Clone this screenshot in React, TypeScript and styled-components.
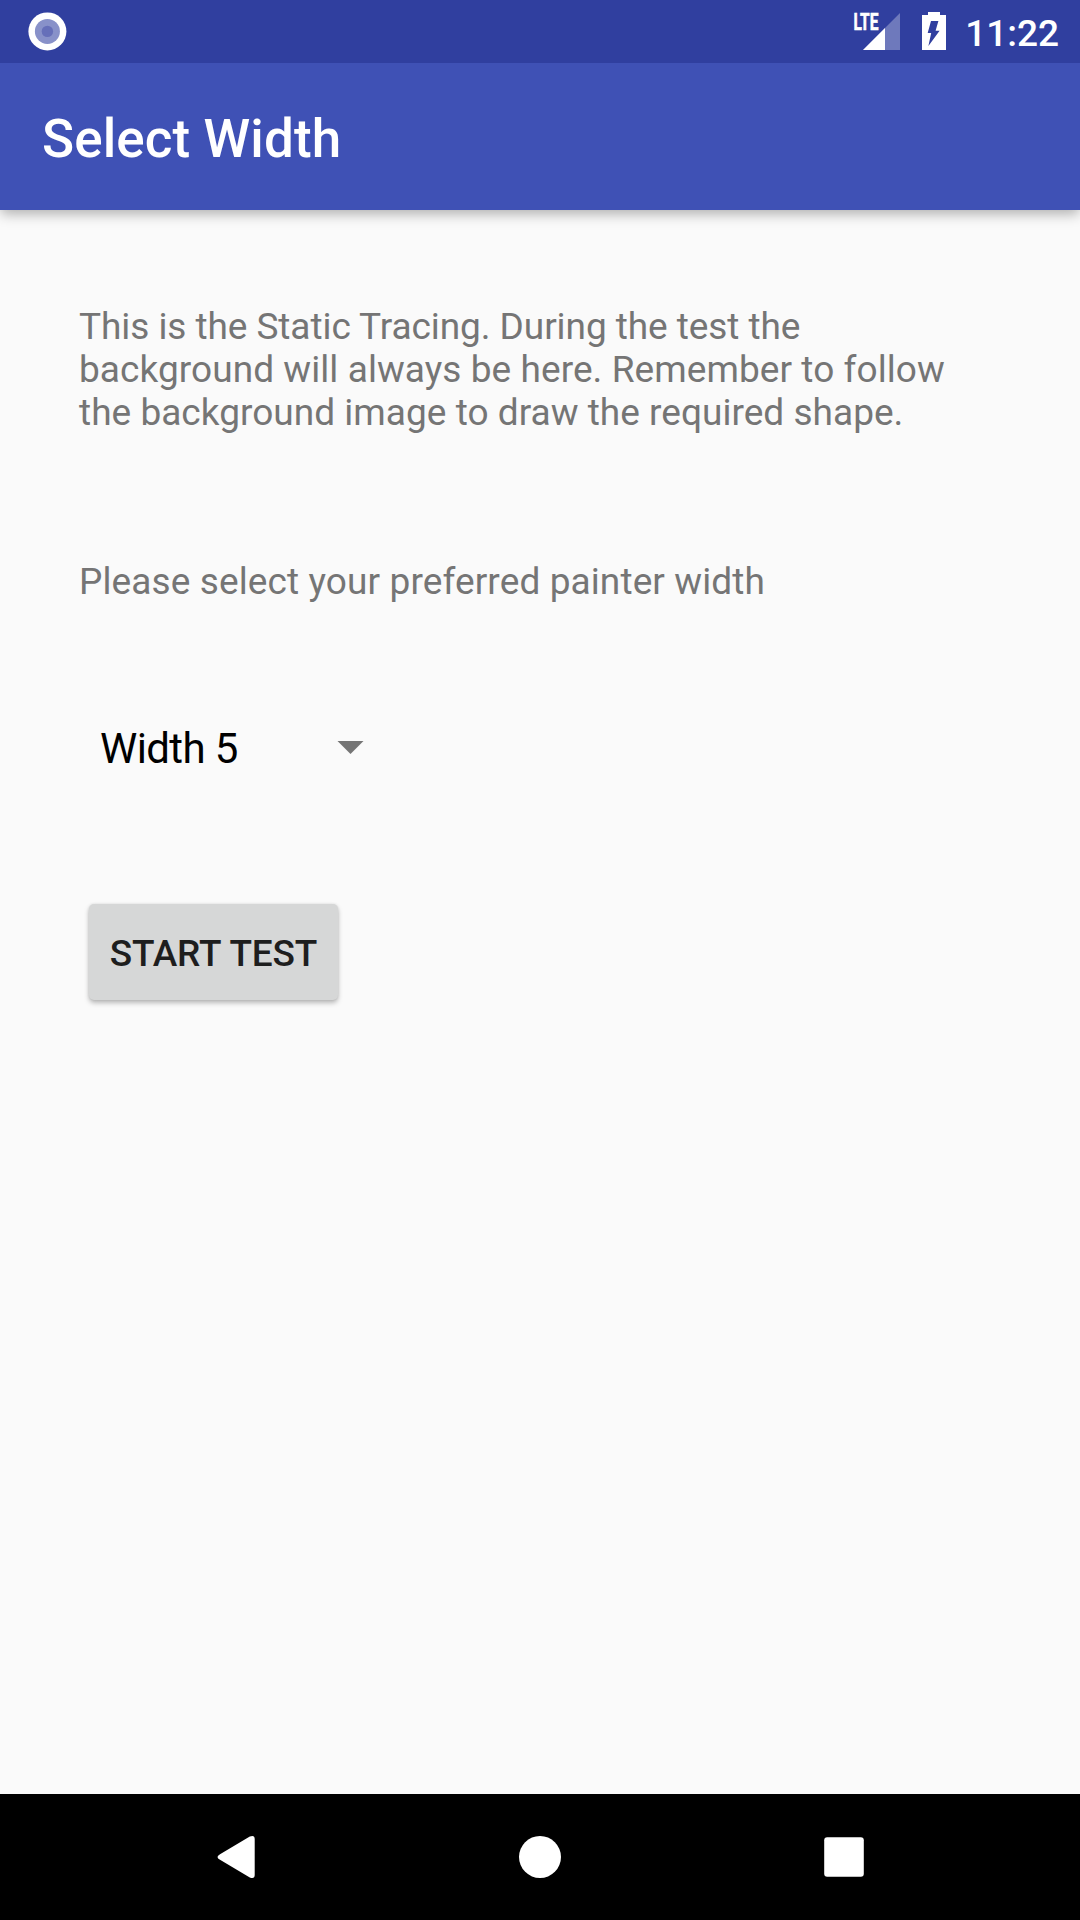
import React from "react";
import styled, { createGlobalStyle } from "styled-components";

const GlobalStyle = createGlobalStyle`
  html, body { margin: 0; padding: 0; background: #fafafa; }
  * { box-sizing: border-box; }
`;

const Screen = styled.div`
  display: flex;
  flex-direction: column;
  width: 1080px;
  height: 1920px;
  overflow: hidden;
  background: #fafafa;
  font-family: Roboto, "Liberation Sans", sans-serif;
`;

const StatusBar = styled.header`
  display: flex;
  justify-content: space-between;
  flex: 0 0 63px;
  padding: 0 21px 0 27px;
  background: #303f9f;
`;

const StatusIcons = styled.div`
  display: flex;
  height: 63px;
`;

const Clock = styled.time`
  margin-left: 17px;
  padding-top: 12px;
  color: #fff;
  font-size: 37px;
  font-weight: 500;
  line-height: 43px;
`;

const AppBar = styled.div`
  display: flex;
  align-items: center;
  flex: 0 0 147px;
  padding: 5px 42px 0;
  background: #3f51b5;
  box-shadow: 0 5px 12px -1px rgba(0, 0, 0, 0.3);
  clip-path: inset(0 0 -30px 0);
`;

const Title = styled.h1`
  margin: 0;
  color: #fff;
  font-size: 53px;
  font-weight: 500;
  letter-spacing: 0.1px;
  line-height: 62px;
`;

const Content = styled.main`
  display: flex;
  flex-direction: column;
  align-items: flex-start;
  flex: 1;
  padding: 95px 79px 0;
`;

const Text = styled.p<{ $gap: number }>`
  width: 900px;
  margin: 0 0 ${(p) => p.$gap}px;
  color: #757575;
  font-size: 37px;
  line-height: 43px;
`;

const Line = styled.span<{ $tracking: number }>`
  display: block;
  letter-spacing: ${(p) => p.$tracking}px;
`;

const Spinner = styled.div`
  display: flex;
  justify-content: space-between;
  width: 285px;
  height: 49px;
  margin-bottom: 131px;
  padding-left: 21px;
  color: #000;
  font-size: 42px;
  letter-spacing: -0.6px;
  line-height: 49px;
`;

const Caret = styled.svg`
  margin-top: 17px;
`;

const StartButton = styled.button`
  width: 249px;
  height: 96px;
  margin: 0 0 0 9.5px;
  padding: 2px 0 0 1px;
  border: 0;
  border-radius: 5px;
  background: #d6d7d7;
  box-shadow: 0 3px 5px rgba(0, 0, 0, 0.26), 0 0 3px rgba(0, 0, 0, 0.1);
  color: #1e1e1e;
  font-family: inherit;
  font-size: 37px;
  font-weight: 500;
  letter-spacing: -0.2px;
  word-spacing: 1px;
  line-height: 43px;
  white-space: nowrap;
`;

const NavBar = styled.nav`
  display: flex;
  justify-content: center;
  flex: 0 0 126px;
  background: #000;
`;

const NavItem = styled.div`
  display: flex;
  align-items: center;
  justify-content: center;
  width: 304px;
`;

export default function App() {
  return (
    <Screen>
      <GlobalStyle />
      <StatusBar>
        <svg width="40" height="63" viewBox="27 0 40 63">
          <circle cx="47.4" cy="31.4" r="19" fill="#fff" />
          <circle cx="47.4" cy="31.4" r="12.5" fill="#8891c9" />
          <circle cx="47.4" cy="31.4" r="5.7" fill="#666fb9" />
        </svg>
        <StatusIcons>
          <svg width="96" height="63" viewBox="852 0 96 63">
            <path d="M900 13V50H863Z" fill="#fff" fillOpacity=".3" />
            <path d="M885 28V50H863Z" fill="#fff" />
            <text
              x="853.4"
              y="30"
              fill="#fff"
              stroke="#fff"
              strokeWidth="0.6"
              fontFamily="Roboto, sans-serif"
              fontSize="23"
              fontWeight="700"
              textLength="25"
              lengthAdjust="spacingAndGlyphs"
            >
              LTE
            </text>
            <path
              fillRule="evenodd"
              fill="#fff"
              d="M928 12H940V15H946V50H922V15H928ZM931 21L927.7 33H931.2L928.4 46L939.6 30.7H935.6L938.4 21Z"
            />
          </svg>
          <Clock>11:22</Clock>
        </StatusIcons>
      </StatusBar>
      <AppBar>
        <Title>Select Width</Title>
      </AppBar>
      <Content>
        <Text $gap={126}>
          <Line $tracking={-0.07}>This is the Static Tracing. During the test the</Line>
          <Line $tracking={0.07}>background will always be here. Remember to follow</Line>
          <Line $tracking={0.03}>the background image to draw the required shape.</Line>
        </Text>
        <Text $gap={121}>
          <Line $tracking={0.11}>Please select your preferred painter width</Line>
        </Text>
        <Spinner>
          Width 5
          <Caret width="27" height="13" viewBox="0 0 27 13">
            <path d="M.5 0H26.5L13.5 13Z" fill="#757575" />
          </Caret>
        </Spinner>
        <StartButton>START TEST</StartButton>
      </Content>
      <NavBar>
        <NavItem>
          <svg width="42" height="44" viewBox="0 0 42 44">
            <path
              d="M5 19.2L34.8 1.6Q39.7 -.2 39.7 4V40Q39.7 44.2 34.8 42.4L5 24.8Q0 22 5 19.2Z"
              fill="#fff"
            />
          </svg>
        </NavItem>
        <NavItem>
          <svg width="44" height="44" viewBox="0 0 44 44">
            <circle cx="22" cy="22" r="21" fill="#fff" />
          </svg>
        </NavItem>
        <NavItem>
          <svg width="42" height="42" viewBox="0 0 42 42">
            <rect x="1.2" y="1.2" width="39.6" height="39.6" rx="3" fill="#fff" />
          </svg>
        </NavItem>
      </NavBar>
    </Screen>
  );
}
